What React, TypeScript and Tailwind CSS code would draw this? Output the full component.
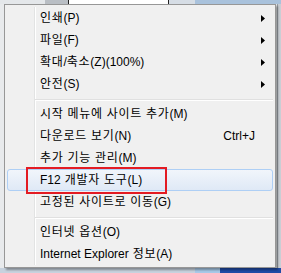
import React from "react";

type Item =
  | { kind: "item"; label: string; sub?: boolean; shortcut?: string; hot?: boolean }
  | { kind: "sep" };

const items: Item[] = [
  { kind: "item", label: "인쇄(P)", sub: true },
  { kind: "item", label: "파일(F)", sub: true },
  { kind: "item", label: "확대/축소(Z)(100%)", sub: true },
  { kind: "item", label: "안전(S)", sub: true },
  { kind: "sep" },
  { kind: "item", label: "시작 메뉴에 사이트 추가(M)" },
  { kind: "item", label: "다운로드 보기(N)", shortcut: "Ctrl+J" },
  { kind: "item", label: "추가 기능 관리(M)" },
  { kind: "item", label: "F12 개발자 도구(L)", hot: true },
  { kind: "item", label: "고정된 사이트로 이동(G)" },
  { kind: "sep" },
  { kind: "item", label: "인터넷 옵션(O)" },
  { kind: "item", label: "Internet Explorer 정보(A)" },
];

function Label({ text }: { text: string }) {
  const parts = text.split(/([\uAC00-\uD7A3 ]+)/).filter((p) => p.length > 0);
  return (
    <>
      {parts.map((p, i) =>
        /[\uAC00-\uD7A3]/.test(p) ? (
          <span key={i} className="tracking-[0.7px]">
            {p}
          </span>
        ) : (
          <span key={i}>{p}</span>
        )
      )}
    </>
  );
}

function Arrow() {
  return (
    <svg width="4" height="7" viewBox="0 0 4 7" className="block">
      <path d="M0 0 L4 3.5 L0 7 Z" fill="#000" />
    </svg>
  );
}

export default function App() {
  return (
    <div
      className="relative w-[281px] h-[273px] overflow-hidden bg-[#e9ecef] flex flex-col"
      style={{ fontFamily: '"Liberation Sans", "Noto Sans CJK KR", sans-serif' }}
    >
      {/* top strip of the window behind */}
      <div className="flex h-[4px] shrink-0">
        <div className="w-[45px] bg-[#e4e7ea]" />
        <div className="w-[23px] bg-[#b9bec4]" />
        <div className="w-[101px] bg-white border-x border-[#222]" />
        <div className="w-[26px] bg-[#d6dde5]" />
        <div className="flex-1 bg-[#a9c2dc]" />
      </div>
      <div className="flex-1 flex">
        <div className="w-[277px] bg-[#e8eaec]" />
        <div className="flex-1 bg-[#c9ced4] border-l border-[#9aa0a6]" />
      </div>
      <div className="flex h-[5px] shrink-0">
        <div className="w-[195px] bg-[#c7d2de]" />
        <div className="w-[25px] bg-[#a8c9e8]" />
        <div className="flex-1 bg-[#1f4ba6]" />
      </div>

      {/* context menu */}
      <div className="absolute left-[4px] top-[4px] w-[272px] h-[264px] bg-[#f0f0f0] border border-[#979797] p-[2px] shadow-[2px_2px_2px_rgba(0,0,0,0.35)] text-[12px] text-black">
        <div className="absolute left-[29px] top-[2px] bottom-[2px] w-[1px] bg-[#e2e3e3]" />
        <div className="absolute left-[30px] top-[2px] bottom-[2px] w-[1px] bg-white" />
        <div className="relative flex flex-col">
          {items.map((it, i) =>
            it.kind === "sep" ? (
              <div key={i} className="h-[8px] pl-[28px] pt-[4px]">
                <div className="h-[1px] bg-[#e0e0e0]" />
                <div className="h-[1px] bg-white" />
              </div>
            ) : (
              <div
                key={i}
                className={
                  "relative h-[22px] flex items-center pl-[32px] pr-[7px] rounded-[3px] border " +
                  (it.hot
                    ? "border-[#aecff5] bg-gradient-to-b from-[#f1f5fb] to-[#dfe9f6]"
                    : "border-transparent")
                }
              >
                <span className="flex-1 whitespace-pre leading-none">
                  <Label text={it.label} />
                </span>
                {it.shortcut && (
                  <span className="mr-[10px] leading-none">{it.shortcut}</span>
                )}
                {it.sub && <Arrow />}
                {it.hot && (
                  <div className="absolute left-[18px] top-[-3px] w-[141px] h-[27px] border-2 border-[#e31b23]" />
                )}
              </div>
            )
          )}
        </div>
      </div>
    </div>
  );
}
